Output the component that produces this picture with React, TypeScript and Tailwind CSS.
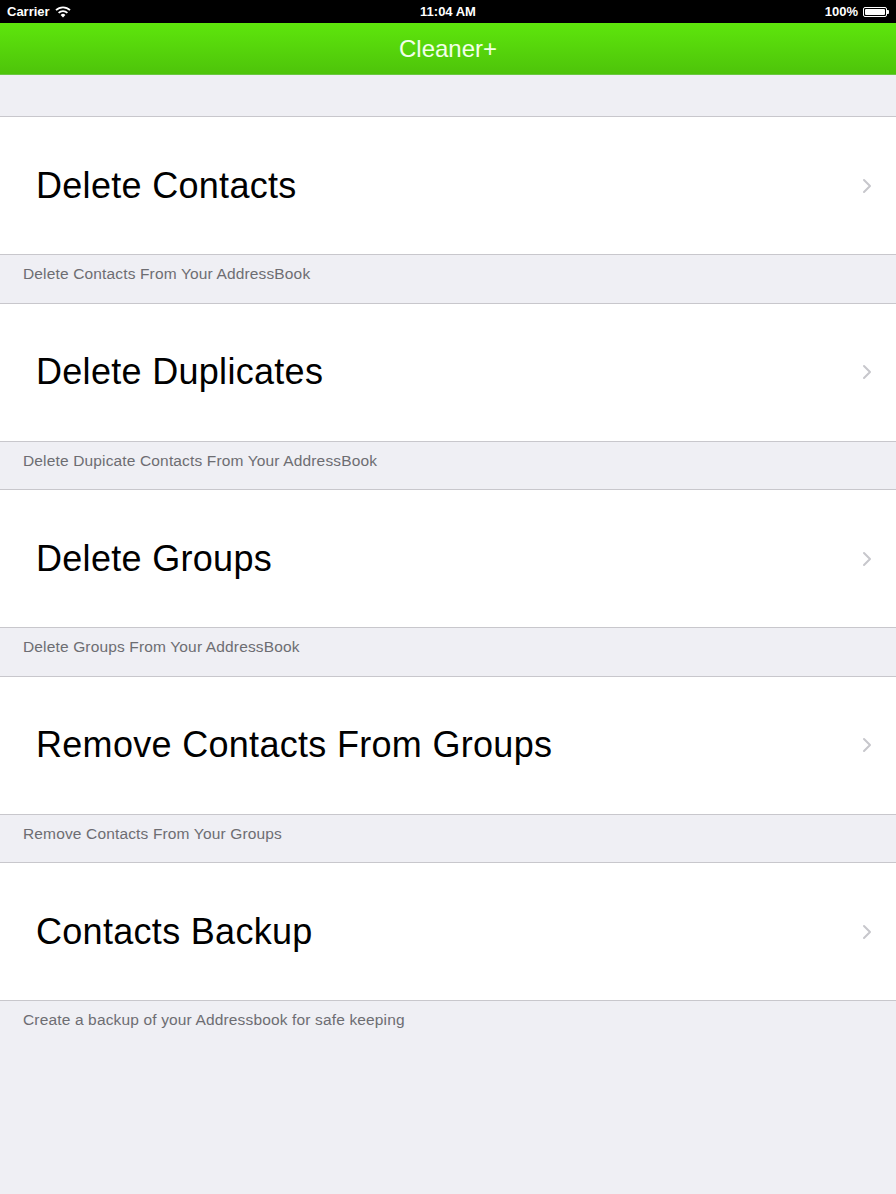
const ITEMS = [
    { title: "Delete Contacts", note: "Delete Contacts From Your AddressBook" },
    { title: "Delete Duplicates", note: "Delete Dupicate Contacts From Your AddressBook" },
    { title: "Delete Groups", note: "Delete Groups From Your AddressBook" },
    { title: "Remove Contacts From Groups", note: "Remove Contacts From Your Groups" },
    { title: "Contacts Backup", note: "Create a backup of your Addressbook for safe keeping" },
];

const font = { fontFamily: '"Liberation Sans", Arial, Helvetica, sans-serif' };

function Wifi () {
    return (
        <svg width="16" height="12" viewBox="0 0 16 12" className="ml-[5px]">
            <path d="M1 4.2 A10 10 0 0 1 15 4.2" stroke="white" strokeWidth="1.8" fill="none" />
            <path d="M3.6 6.8 A6.4 6.4 0 0 1 12.4 6.8" stroke="white" strokeWidth="1.8" fill="none" />
            <path d="M8 11.5 L5.6 9 A3.4 3.4 0 0 1 10.4 9 Z" fill="white" />
        </svg>
    );
}

function Battery () {
    return (
        <div className="flex items-center ml-[5px]">
            <div className="w-[24px] h-[10px] border border-white rounded-[2px] p-[1px]">
                <div className="w-full h-full bg-white rounded-[1px]" />
            </div>
            <div className="w-[2px] h-[4px] bg-white rounded-r-[1px]" />
        </div>
    );
}

function Chevron () {
    return (
        <svg width="10" height="16" viewBox="0 0 10 16">
            <path d="M2 2 L8 8 L2 14" stroke="#c7c7cc" strokeWidth="2" fill="none" strokeLinecap="round" strokeLinejoin="round" />
        </svg>
    );
}

export default function App () {
    return (
        <div className="w-[896px] h-[1194px] bg-[#efeff4] overflow-hidden" style={font}>
            <div className="h-[23px] bg-black text-white text-[13px] font-bold flex items-center justify-between px-[7px] relative">
                <div className="flex items-center">
                    Carrier
                    <Wifi />
                </div>
                <span className="absolute left-1/2 -translate-x-1/2">11:04 AM</span>
                <div className="flex items-center">
                    100%
                    <Battery />
                </div>
            </div>
            <div className="h-[52px] bg-gradient-to-b from-[#5ee60c] to-[#4ec40a] border-b border-[#6bc840] flex items-center justify-center">
                <span className="text-[24px] text-[#f2ffe8]">Cleaner+</span>
            </div>
            <div className="h-[41px]" />
            {ITEMS.map((item) => (
                <div key={item.title}>
                    <div className="h-[139px] bg-white border-y border-[#c8c7cc] flex items-center justify-between pl-[36px] pr-[24px]">
                        <span className="text-[36px] text-black tracking-[0.3px]">{item.title}</span>
                        <Chevron />
                    </div>
                    <div className="h-[47.5px] pt-[7px] pl-[23px] text-[15.5px] tracking-[0.15px] text-[#6d6d72]">{item.note}</div>
                </div>
            ))}
        </div>
    );
}
